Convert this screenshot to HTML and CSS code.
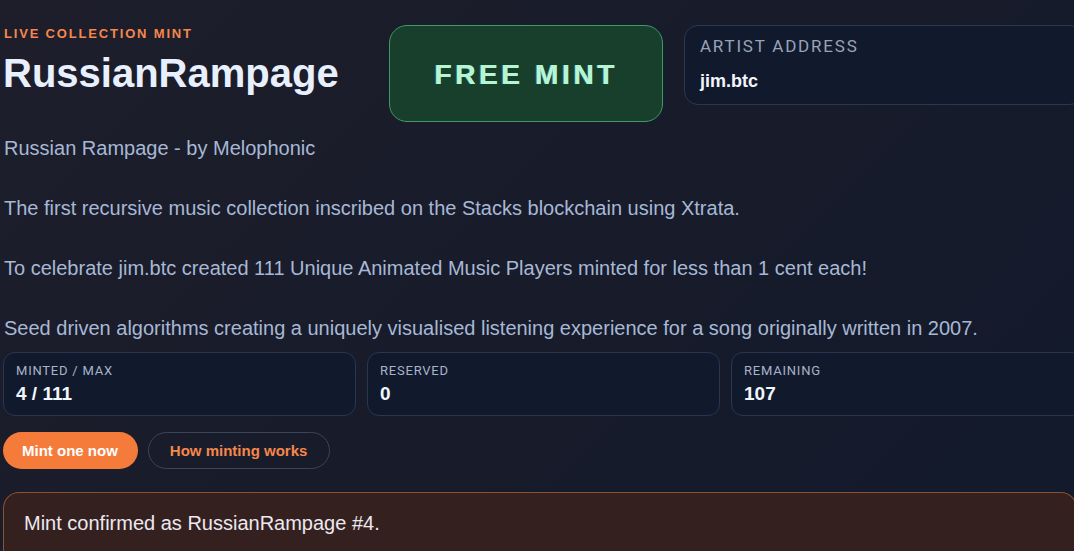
FILE: index.html
```html
<!DOCTYPE html>
<html lang="en">
<head>
  <meta charset="UTF-8" />
  <meta name="viewport" content="width=device-width, initial-scale=1" />
  <title>RussianRampage - Live Mint</title>
  <link rel="stylesheet" href="styles.css">
</head>
<body>
  <div id="page">

    <!-- HEADER -->
    <div class="header">
      <div class="title-block">
        <div class="eyebrow">LIVE COLLECTION MINT</div>
        <h1>RussianRampage</h1>
      </div>
      <div class="free-badge">FREE MINT</div>
      <div class="artist-box">
        <div class="artist-label">ARTIST ADDRESS</div>
        <div class="artist-value">jim.btc</div>
      </div>
    </div>

    <!-- DESCRIPTION -->
    <div class="description">Russian Rampage - by Melophonic

The first recursive music collection inscribed on the Stacks blockchain using Xtrata.

To celebrate jim.btc created 111 Unique Animated Music Players minted for less than 1 cent each!

Seed driven algorithms creating a uniquely visualised listening experience for a song originally written in 2007.</div>

    <!-- STATS -->
    <div class="stats">
      <div class="stat">
        <div class="stat-label">MINTED / MAX</div>
        <div class="stat-value" id="minted">4 / 111</div>
      </div>
      <div class="stat">
        <div class="stat-label">RESERVED</div>
        <div class="stat-value" id="reserved">0</div>
      </div>
      <div class="stat">
        <div class="stat-label">REMAINING</div>
        <div class="stat-value" id="remaining">107</div>
      </div>
    </div>

    <div class="actions">
      <button class="btn primary">Mint one now</button>
      <button class="btn ghost">How minting works</button>
    </div>

    <div class="notice">Mint confirmed as RussianRampage #4.</div>
  </div>
</body>
</html>
```

FILE: styles.css
```css
* {
  box-sizing: border-box;
}

body {
  margin: 0;
  min-height: 100vh;
  overflow: hidden;
  background: linear-gradient(135deg, #1e1e2b 0%, #171b2a 55%, #121a2c 100%);
  font-family: "Liberation Sans", Arial, sans-serif;
  color: #e6eefc;
}

#page {
  width: 1081px;
  margin-left: 3px;
  padding-top: 25px;
}

/* Header row */
.header {
  display: flex;
  align-items: flex-start;
  gap: 21px;
}
.title-block {
  width: 365px;
  flex-shrink: 0;
}
.eyebrow {
  font-size: 13px;
  line-height: 15px;
  font-weight: 700;
  letter-spacing: 0.14em;
  color: #f5874b;
  padding-left: 1px;
  padding-top: 1px;
}
h1 {
  margin: 10px 0 0;
  font-size: 40px;
  line-height: 45px;
  font-weight: 700;
  color: #e8effd;
}

.free-badge {
  width: 274px;
  height: 97px;
  flex-shrink: 0;
  display: flex;
  justify-content: center;
  align-items: center;
  background-color: #173f2b;
  border: 1px solid #3f9a67;
  border-radius: 18px;
  font-size: 28px;
  font-weight: 700;
  letter-spacing: 0.13em;
  padding-top: 2px;
  color: #b6f5d3;
  text-shadow: -1px 0 0 rgba(60, 120, 160, 0.6), 0.5px 0 0 #b6f5d3;
}

.artist-box {
  flex: 1;
  height: 80px;
  background-color: #111a2d;
  border: 1px solid #2c374d;
  border-radius: 14px;
  padding: 10px 15px 0;
}
.artist-label {
  font-family: Roboto, "Liberation Sans", sans-serif;
  font-size: 17px;
  line-height: 20px;
  letter-spacing: 0.105em;
  color: #98a3b8;
}
.artist-value {
  margin-top: 13px;
  font-size: 18px;
  line-height: 24px;
  font-weight: 700;
  color: #f2f5fc;
}

/* Description */
.description {
  margin-top: 11px;
  padding-left: 1px;
  white-space: pre-line;
  font-size: 20px;
  line-height: 30px;
  color: #a7b8d5;
}

/* Stat cards */
.stats {
  margin-top: 9px;
  display: grid;
  grid-template-columns: repeat(3, 1fr);
  gap: 11px;
}
.stat {
  height: 64px;
  background-color: #111a2d;
  border: 1px solid #2a3650;
  border-radius: 12px;
  padding: 10px 12px 0;
}
.stat-label {
  font-family: Roboto, "Liberation Sans", sans-serif;
  font-size: 13px;
  line-height: 16px;
  letter-spacing: 0.06em;
  color: #a8b3c8;
}
.stat-value {
  margin-top: 4px;
  font-size: 19px;
  line-height: 22px;
  font-weight: 700;
  color: #f2f6fd;
}

/* Buttons */
.actions {
  margin-top: 16px;
  display: flex;
  gap: 10px;
}
.btn {
  height: 37px;
  border-radius: 19px;
  font-family: "Liberation Sans", Arial, sans-serif;
  font-size: 15px;
  font-weight: 700;
  cursor: pointer;
}
.btn.primary {
  padding: 0 20px 0 19px;
  background-color: #f57b3b;
  border: none;
  color: #ffffff;
}
.btn.ghost {
  padding: 0 22px 0 21px;
  background-color: transparent;
  border: 1px solid #3a4558;
  color: #f5874b;
}

/* Status message */
.notice {
  margin-top: 23px;
  width: 1074px;
  height: 90px;
  background-color: #34211f;
  border: 1px solid rgba(214, 120, 66, 0.55);
  border-radius: 16px;
  padding: 18px 20px;
  font-size: 20px;
  line-height: 24px;
  color: #ece8f0;
}
```
